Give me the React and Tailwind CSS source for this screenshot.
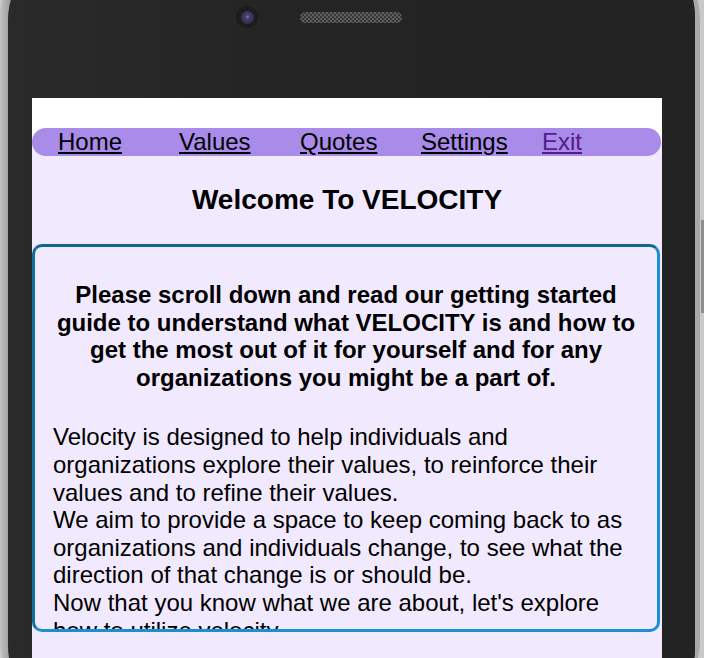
import React from 'react'

const links = [
  { label: 'Home', visited: false },
  { label: 'Values', visited: false },
  { label: 'Quotes', visited: false },
  { label: 'Settings', visited: false },
  { label: 'Exit', visited: true },
]

function App() {
  return (
    <div className="relative w-[704px] h-[658px] overflow-hidden bg-[#c9c9c9] font-['Liberation_Sans',Arial,sans-serif]">
      {/* side button */}
      <div className="absolute right-0 top-[220px] w-[3px] h-[93px] bg-[#8d8d8d]" />

      {/* phone shell */}
      <div className="-mt-[60px] w-[700px] h-[780px] rounded-[80px] bg-[linear-gradient(90deg,#c2c2c2_0px,#a4a4a4_8px,#a8a8a8_100%)] pl-[8px] pr-[5px] pt-[6px]">
        <div className="h-full rounded-[74px] bg-[#2b2b2b] pl-[4px]">
          <div className="h-full rounded-[70px] bg-[linear-gradient(90deg,#2a2a2a,#242424_40%,#232323)] pl-[20px] pt-[60px]">
            {/* camera + speaker */}
            <div className="flex items-center h-[22px]">
              <div className="ml-[204px] w-[22px] h-[22px] rounded-full bg-[#1c1c1c] flex items-center justify-center">
                <div className="w-[13px] h-[13px] rounded-full bg-[radial-gradient(circle_at_50%_45%,#8a7bb0_0px,#4b3d70_2px,#3a3058_60%,#241d35_100%)]" />
              </div>
              <div className="ml-[42px] w-[102px] h-[11px] rounded-full bg-[repeating-conic-gradient(#5e5e5e_0%_25%,#383838_0%_50%)] bg-[length:4px_4px]" />
            </div>

            {/* screen */}
            <div className="mt-[70px] w-[630px] h-[600px] bg-[#f1e9fe] flex flex-col">
              <div className="h-[30px] bg-white" />
              <div className="bg-[linear-gradient(#ffffff_50%,#f1e9fe_50%)]">
                <nav className="w-[629px] h-[28px] rounded-[14px] bg-[#a98be9] pl-[26px] flex">
                  {links.map(l => (
                    <a
                      key={l.label}
                      href="#"
                      className={`w-[121px] shrink-0 text-[24px] leading-[28px] underline ${l.visited ? 'text-[#551a8b]' : 'text-black'}`}
                    >
                      <span>{l.label}</span>
                    </a>
                  ))}
                </nav>
              </div>

              <h1 className="mt-[28px] text-center text-[28px] leading-[32px] font-bold text-black">
                Welcome To VELOCITY
              </h1>

              <div className="mt-[28px] w-[628px] h-[388px] shrink-0 rounded-[10px] border-[3px] border-t-[#11668f] border-l-[#136d98] border-r-[#1b8fcf] border-b-[#1b8fcf] overflow-hidden px-[18px] text-black">
                <h2 className="mt-[34px] text-center text-[24px] leading-[1.15] font-bold">
                  Please scroll down and read our getting started guide to understand what VELOCITY is and how to get the most out of it for yourself and for any organizations you might be a part of.
                </h2>
                <p className="mt-[32px] text-[24px] leading-[1.15]">
                  Velocity is designed to help individuals and organizations explore their values, to reinforce their values and to refine their values.
                  <br />
                  We aim to provide a space to keep coming back to as organizations and individuals change, to see what the direction of that change is or should be.
                  <br />
                  Now that you know what we are about, let's explore how to utilize velocity.
                </p>
              </div>
            </div>
          </div>
        </div>
      </div>
    </div>
  )
}

export default App
